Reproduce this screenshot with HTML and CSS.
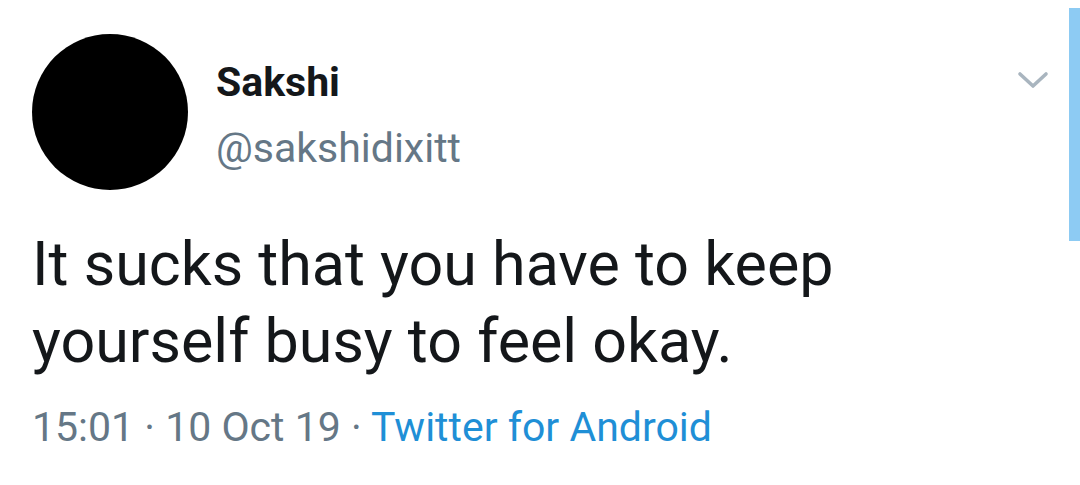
FILE: index.html
```html
<!DOCTYPE html>
<html lang="en">
<head>
<meta charset="utf-8">
<title>Tweet</title>
<link rel="stylesheet" href="styles.css">
</head>
<body>
<main class="tweet">
  <header class="tweet-head">
    <div class="avatar"></div>
    <div class="ident">
      <div class="name">Sakshi</div>
      <div class="handle">@sakshidixitt</div>
    </div>
    <div class="caret">
      <svg width="32" height="18" viewBox="0 0 32 18"><path d="M3 3 L16 15 L29 3" fill="none" stroke="#a9b5bf" stroke-width="3.6" stroke-linecap="round" stroke-linejoin="round"/></svg>
    </div>
  </header>
  <p class="text">It sucks that you have to keep<br>yourself busy to feel okay.</p>
  <div class="meta"><span class="time">15:01 · 10 Oct 19 · </span><span class="source">Twitter for Android</span></div>
</main>
<div class="scroll-indicator"></div>
</body>
</html>
```
FILE: styles.css
```css
html, body {
  margin: 0;
  padding: 0;
  background: #ffffff;
}
body {
  width: 1080px;
  height: 485px;
  overflow: hidden;
  position: relative;
  font-family: Roboto, "Noto Sans", "Liberation Sans", sans-serif;
  color: #14171a;
}
.tweet {
  padding: 34px 0 0 32px;
}
.tweet-head {
  display: flex;
  align-items: flex-start;
}
.avatar {
  width: 156px;
  height: 156px;
  border-radius: 50%;
  background: #000;
  flex: none;
}
.ident {
  margin-left: 28px;
  margin-top: 24px;
  display: flex;
  flex-direction: column;
  gap: 18px;
}
.name {
  font-size: 41px;
  line-height: 48px;
  font-weight: 700;
  color: #14171a;
}
.handle {
  font-size: 41px;
  line-height: 48px;
  color: #657786;
}
.caret {
  margin-left: auto;
  margin-right: 31px;
  margin-top: 37px;
  line-height: 0;
}
.text {
  margin: 36px 0 0 0;
  font-size: 61px;
  line-height: 77px;
  color: #14171a;
}
.meta {
  margin-top: 23px;
  font-size: 41px;
  line-height: 48px;
  color: #657786;
}
.source {
  color: #1f8fd6;
}
.scroll-indicator {
  position: absolute;
  top: 8px;
  right: 0;
  width: 11px;
  height: 233px;
  background: #8dcbf3;
}
```
